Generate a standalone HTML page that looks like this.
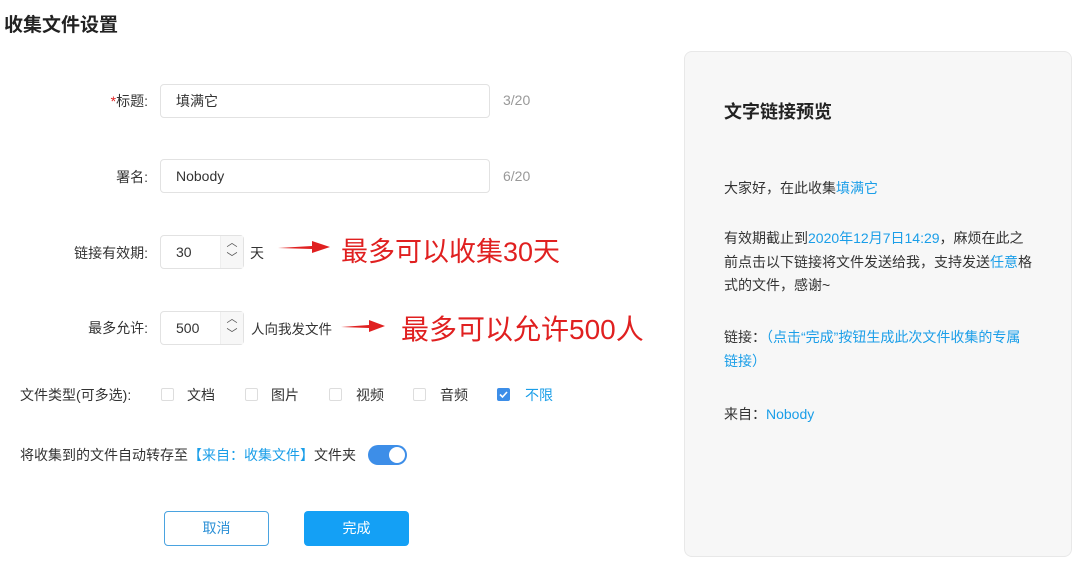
<!DOCTYPE html>
<html><head><meta charset="utf-8"><style>
*{margin:0;padding:0;box-sizing:border-box}
body{width:1080px;height:569px;background:#fff;position:relative;overflow:hidden;font-family:"Liberation Sans","Noto Sans CJK SC",sans-serif;color:#333;font-size:14px}
.a{position:absolute;white-space:nowrap}
.lbl{position:absolute;right:932px;text-align:right;font-size:14px;color:#333}
.inp{position:absolute;border:1px solid #e2e2e2;border-radius:4px;background:#fff;padding-left:15px;font-size:14px;color:#333;display:flex;align-items:center}
.cnt{color:#999;font-size:14px}
.cb{position:absolute;width:13px;height:13px;border:1px solid #ddd;border-radius:2px;top:388px;background:#fff}
.ct{position:absolute;top:385px;font-size:14px}
.blue{color:#1a9ee8}
.red{color:#e02020}
.p{font-size:14px;color:#333}
</style></head><body>
<div class="a" style="left:4px;top:10px;font-size:19px;font-weight:bold;color:#222">收集文件设置</div>

<div class="lbl" style="top:91px"><span class="red">*</span>标题:</div>
<div class="inp" style="left:160px;top:84px;width:330px;height:34px">填满它</div>
<div class="a cnt" style="left:503px;top:92px">3/20</div>

<div class="lbl" style="top:167px">署名:</div>
<div class="inp" style="left:160px;top:159px;width:330px;height:34px">Nobody</div>
<div class="a cnt" style="left:503px;top:168px">6/20</div>

<div class="lbl" style="top:243px">链接有效期:</div>
<div class="inp" style="left:160px;top:235px;width:84px;height:34px">30
<div style="position:absolute;right:0;top:0;width:23px;height:32px;background:#f7f7f7;border-left:1px solid #eee;font-size:11px;color:#555;text-align:center;line-height:15px">︿<br>﹀</div></div>
<div class="a" style="left:250px;top:243px">天</div>
<svg class="a" style="left:276px;top:239px" width="56" height="16"><path d="M2 9 L36 7 L36 2 L54 8 L36 14 L36 10 Z" fill="#e02020"/></svg>
<div class="a red" style="left:341px;top:230px;font-size:27px">最多可以收集30天</div>

<div class="lbl" style="top:318px">最多允许:</div>
<div class="inp" style="left:160px;top:311px;width:84px;height:34px">500
<div style="position:absolute;right:0;top:0;width:23px;height:32px;background:#f7f7f7;border-left:1px solid #eee;font-size:11px;color:#555;text-align:center;line-height:15px">︿<br>﹀</div></div>
<div class="a" style="left:251px;top:318px;font-size:13.5px">人向我发文件</div>
<svg class="a" style="left:339px;top:318px" width="48" height="16"><path d="M2 9 L30 7 L30 2 L46 8 L30 14 L30 10 Z" fill="#e02020"/></svg>
<div class="a red" style="left:401px;top:308px;font-size:28px">最多可以允许500人</div>

<div class="a" style="left:20px;top:385px">文件类型(可多选):</div>
<div class="cb" style="left:161px"></div><div class="ct" style="left:187px">文档</div>
<div class="cb" style="left:245px"></div><div class="ct" style="left:271px">图片</div>
<div class="cb" style="left:329px"></div><div class="ct" style="left:356px">视频</div>
<div class="cb" style="left:413px"></div><div class="ct" style="left:440px">音频</div>
<div class="cb" style="left:497px;background:#3d8ee8;border-color:#3d8ee8"><svg width="11" height="11" style="display:block"><path d="M2 5.5 L4.5 8 L9 3" stroke="#fff" stroke-width="1.6" fill="none"/></svg></div><div class="ct blue" style="left:525px">不限</div>

<div class="a" style="left:20px;top:445px">将收集到的文件自动转存至<span class="blue">【来自：收集文件】</span>文件夹</div>
<div class="a" style="left:368px;top:445px;width:39px;height:20px;border-radius:10px;background:#3d8ee8"><div style="position:absolute;right:2px;top:2px;width:16px;height:16px;border-radius:50%;background:#fff"></div></div>

<div class="a" style="left:164px;top:511px;width:105px;height:35px;border:1px solid #4aa3e0;border-radius:4px;color:#2a8fd6;text-align:center;line-height:33px">取消</div>
<div class="a" style="left:304px;top:511px;width:105px;height:35px;background:#14a0f5;border-radius:4px;color:#fff;text-align:center;line-height:35px">完成</div>

<div class="a" style="left:684px;top:51px;width:388px;height:506px;background:#f7f7f7;border:1px solid #e8e8e8;border-radius:8px"></div>
<div class="a" style="left:724px;top:98px;font-size:18px;font-weight:bold;color:#222">文字链接预览</div>
<div class="a p" style="left:724px;top:177px;line-height:23px">大家好，在此收集<span class="blue">填满它</span></div>
<div class="a p" style="left:724px;top:227px;line-height:23.5px">有效期截止到<span class="blue">2020年12月7日14:29</span>，麻烦在此之<br>前点击以下链接将文件发送给我，支持发送<span class="blue">任意</span>格<br>式的文件，感谢~</div>
<div class="a p" style="left:724px;top:326px;line-height:23.5px">链接：<span class="blue">（点击“完成”按钮生成此次文件收集的专属<br>链接）</span></div>
<div class="a p" style="left:724px;top:404px">来自：<span class="blue">Nobody</span></div>
</body></html>
